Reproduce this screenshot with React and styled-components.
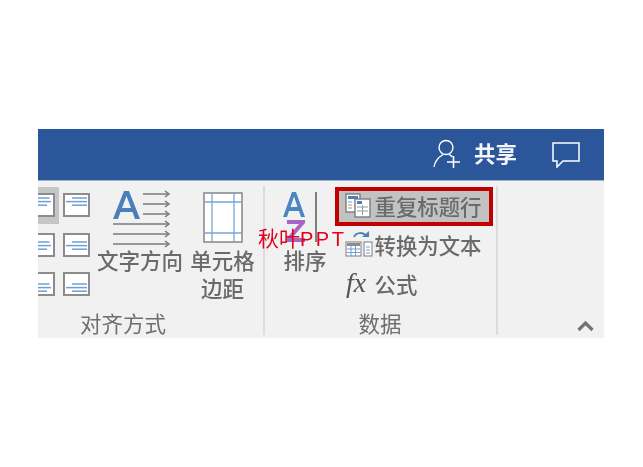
import React from 'react';
import styled, { createGlobalStyle } from 'styled-components';

const GlobalStyle = createGlobalStyle`
  html, body { margin: 0; padding: 0; background: #fff; }
  body { font-family: "Noto Sans CJK SC", "Liberation Sans", sans-serif; }
`;

const Page = styled.div`
  width: 643px;
  height: 467px;
  padding: 129px 39px 0 38px;
  box-sizing: border-box;
  overflow: hidden;
`;

const Window = styled.div`
  position: relative;
  width: 566px;
  height: 209px;
  display: flex;
  flex-direction: column;
  filter: blur(0.35px);
`;

const TitleBar = styled.div`
  height: 51px;
  flex: none;
  background: #2b579a;
  border-bottom: 1px solid #9fb2d0;
  display: flex;
  align-items: center;
  justify-content: flex-end;
  padding-right: 24px;
`;

const ShareLabel = styled.span`
  font-size: 21.5px;
  font-weight: 700;
  color: #f4f6fa;
  line-height: 28px;
  margin: 0 35px 4px 13px;
`;

const Ribbon = styled.div`
  flex: 1;
  background: #f1f1f1;
  display: flex;
  position: relative;
`;

const Group = styled.section`
  width: ${p => p.$width}px;
  flex: none;
  position: relative;
  display: flex;
  flex-direction: column;
  overflow: hidden;
  &::after {
    content: '';
    position: absolute;
    right: 0;
    top: 5px;
    bottom: 3px;
    width: 2px;
    background: #dcdcdc;
  }
`;

const GroupBody = styled.div`
  flex: 1;
  display: flex;
  padding-top: 6px;
`;

const GroupLabel = styled.div`
  height: 29px;
  font-size: 21.5px;
  line-height: 28px;
  color: #6f6f6f;
  text-align: center;
  padding-right: ${p => p.$shift || 0}px;
`;

const AlignGrid = styled.div`
  margin-left: -15px;
  width: 71px;
  flex: none;
  display: grid;
  grid-template-columns: 36px 35px;
  grid-auto-rows: 39.5px;
`;

const AlignCell = styled.div`
  display: flex;
  align-items: flex-start;
  justify-content: center;
  padding-top: 6px;
  box-sizing: border-box;
  height: ${p => (p.$active ? '37px' : 'auto')};
  background: ${p => (p.$active ? '#c6c6c6' : 'transparent')};
`;

const BigButton = styled.div`
  display: flex;
  flex-direction: column;
  align-items: center;
  flex: none;
  width: ${p => p.$width}px;
  margin-left: ${p => p.$left || 0}px;
`;

const IconSlot = styled.div`
  height: 59px;
  display: flex;
  align-items: flex-start;
  justify-content: center;
  padding-top: ${p => p.$top || 0}px;
  box-sizing: border-box;
`;

const BigText = styled.div`
  font-size: 21.5px;
  font-weight: 500;
  line-height: 28px;
  color: #6a6a6a;
  text-align: center;
  white-space: nowrap;
`;

const ToolColumn = styled.div`
  margin-left: 8px;
  width: 158px;
  flex: none;
  display: flex;
  flex-direction: column;
`;

const ToolRow = styled.div`
  height: 39px;
  box-sizing: border-box;
  display: flex;
  align-items: center;
  font-size: 21.4px;
  font-weight: 500;
  color: #6a6a6a;
  white-space: nowrap;
  padding-left: ${p => (p.$marked ? 6 : 10)}px;
  padding-bottom: 3px;
  ${p => p.$marked && `
    border: 4px solid #c00000;
    background: #c2c2c2;
  `}
`;

const ToolIcon = styled.span`
  width: 29.500px;
  flex: none;
  display: flex;
  align-items: center;
`;

const Collapse = styled.div`
  position: absolute;
  right: 10px;
  bottom: 6px;
  display: flex;
`;

const Watermark = styled.div`
  position: absolute;
  left: 220px;
  top: 42px;
  font-size: 21px;
  line-height: 28px;
  color: #e3001b;
  white-space: nowrap;
`;

const WatermarkLatin = styled.span`
  font-size: 20px;
  letter-spacing: 2.5px;
  font-family: "Liberation Sans", sans-serif;
`;

function AlignIcon({ row, side }) {
  const top = { top: 4, mid: 8, bot: 11 }[row];
  const spans = side === 'left'
    ? [[2, 21.5], [2, 23], [2, 19]]
    : [[9, 24], [3, 24], [9, 24]];
  return (
    <svg width="27" height="24" viewBox="0 0 27 24">
      <rect x="1" y="1" width="25" height="22" fill="#fff" stroke="#8c8c8c" strokeWidth="2" />
      <g stroke="#6f9fd4" strokeWidth="1.5">
        {spans.map(([x1, x2], i) => (
          <line key={i} x1={x1} x2={x2} y1={top + 1 + i * 3.6} y2={top + 1 + i * 3.6} />
        ))}
      </g>
    </svg>
  );
}

function TextDirectionIcon() {
  const arrow = (x, y) => (
    <g key={y}>
      <line x1={x} x2="55" y1={y} y2={y} stroke="#7a7a7a" strokeWidth="1.5" />
      <path d={`M52 ${y - 3} L56 ${y} L52 ${y + 3}`} fill="none" stroke="#7a7a7a" strokeWidth="1.5" />
    </g>
  );
  return (
    <svg width="61" height="58" viewBox="-3 0 61 58">
      <path d="M0 29 L11 1 H16 L27 29 H22 L19.500 22 H7.500 L5 29 Z M9 18 H18 L13.500 6 Z" fill="#4a80ba" fillRule="evenodd" />
      {[4, 14, 24].map(y => arrow(30, y))}
      {[34, 44, 54].map(y => arrow(0, y))}
    </svg>
  );
}

function CellMarginIcon() {
  return (
    <svg width="40" height="51" viewBox="0 0 40 51">
      <rect x="1" y="1" width="38" height="49" fill="#fff" stroke="#8c8c8c" strokeWidth="1.6" />
      <g stroke="#79a5d6" strokeWidth="1.3">
        <line x1="9" x2="9" y1="1" y2="50" />
        <line x1="31" x2="31" y1="1" y2="50" />
        <line x1="1" x2="39" y1="10" y2="10" />
        <line x1="1" x2="39" y1="41" y2="41" />
      </g>
    </svg>
  );
}

function SortIcon() {
  return (
    <svg width="44" height="54" viewBox="0 0 44 54">
      <path d="M0 26 L9 1 H13 L22 26 H18 L16 20 H6 L4 26 Z M7.500 16 H14.500 L11 5.500 Z" fill="#4a86c0" fillRule="evenodd" />
      <path d="M4 29 H22 V32 L9 47 H22 V51 H3 V48 L16 33 H4 Z" fill="#a566c8" />
      <rect x="32" y="1" width="2" height="50" fill="#808080" />
    </svg>
  );
}

function RepeatHeaderIcon() {
  return (
    <svg width="26" height="25" viewBox="0 0 26 25">
      <rect x="1" y="1" width="14" height="18" fill="#fff" stroke="#7c7c7c" strokeWidth="1.4" />
      <rect x="3" y="3" width="10" height="3" fill="#4a80ba" />
      <path d="M3 9 H7 M3 12 H7 M3 15 H7" stroke="#9a9a9a" />
      <rect x="10" y="6" width="15" height="18" fill="#fff" stroke="#7c7c7c" strokeWidth="1.4" />
      <rect x="12" y="8" width="5" height="3" fill="#4a80ba" />
      <path d="M12 14 H23 M12 18 H23 M17.500 12 V22" stroke="#9a9a9a" />
    </svg>
  );
}

function ConvertIcon() {
  return (
    <svg width="28" height="28" viewBox="0 0 28 28">
      <path d="M9 7 C11 2 18 2 21 6" fill="none" stroke="#4a80ba" strokeWidth="2" />
      <path d="M17 7 H24 V1 Z" fill="#4a80ba" />
      <rect x="1" y="12" width="15" height="14" fill="#fff" stroke="#7c7c7c" />
      <rect x="2" y="13" width="13" height="3" fill="#8c8c8c" />
      <path d="M2 19 H15 M2 22.500 H15 M6 16 V26 M10.500 16 V26" stroke="#6f9fd4" />
      <rect x="19" y="12" width="8" height="14" fill="#fff" stroke="#7c7c7c" />
      <path d="M21 17 H25 M21 20 H25 M21 23 H25" stroke="#6f9fd4" />
    </svg>
  );
}

function FxIcon() {
  return (
    <svg width="24" height="32" viewBox="0 0 24 32" style={{ overflow: 'visible' }}>
      <text x="1" y="24.500" fontFamily="Liberation Serif, serif" fontStyle="italic" fontSize="28" fill="#555">
        fx
      </text>
    </svg>
  );
}

function ShareIcon() {
  return (
    <svg width="28" height="30" viewBox="0 0 28 30" style={{ marginBottom: 2 }}>
      <circle cx="13" cy="8.500" r="7" fill="none" stroke="#fff" strokeWidth="1.4" />
      <path d="M1 28 C2 21 6 18 10 15.500 M16 15.500 C17.500 16.500 18.500 17 19.500 18" fill="none" stroke="#fff" strokeWidth="1.4" />
      <path d="M20.500 17 V29 M14 23 H27" stroke="#fff" strokeWidth="1.6" />
    </svg>
  );
}

function CommentIcon() {
  return (
    <svg width="28" height="26" viewBox="0 0 28 26">
      <path d="M1 1 H27 V19 H11 L5 25 V19 H1 Z" fill="none" stroke="#fff" strokeWidth="1.5" />
    </svg>
  );
}

function ChevronIcon() {
  return (
    <svg width="17" height="12" viewBox="0 0 17 12">
      <path d="M1.500 10 L8.500 3 L15.500 10" fill="none" stroke="#737373" strokeWidth="3.2" />
    </svg>
  );
}

const alignRows = ['top', 'mid', 'bot'];

export default function App() {
  return (
    <Page>
      <GlobalStyle />
      <Window>
        <TitleBar>
          <ShareIcon />
          <ShareLabel>共享</ShareLabel>
          <CommentIcon />
        </TitleBar>
        <Ribbon>
          <Group $width={227}>
            <GroupBody>
              <AlignGrid>
                {alignRows.map((row, i) => (
                  <React.Fragment key={row}>
                    <AlignCell $active={i === 0}><AlignIcon row={row} side="left" /></AlignCell>
                    <AlignCell><AlignIcon row={row} side="center" /></AlignCell>
                  </React.Fragment>
                ))}
              </AlignGrid>
              <BigButton $width={86} $left={3}>
                <IconSlot $top={3}><TextDirectionIcon /></IconSlot>
                <BigText>文字方向</BigText>
              </BigButton>
              <BigButton $width={65} $left={7}>
                <IconSlot $top={5}><CellMarginIcon /></IconSlot>
                <BigText>单元格<br />边距</BigText>
              </BigButton>
            </GroupBody>
            <GroupLabel $shift={57}>对齐方式</GroupLabel>
          </Group>
          <Group $width={233}>
            <GroupBody>
              <BigButton $width={44} $left={18}>
                <IconSlot $top={4}><SortIcon /></IconSlot>
                <BigText>排序</BigText>
              </BigButton>
              <ToolColumn>
                <ToolRow $marked>
                  <ToolIcon><RepeatHeaderIcon /></ToolIcon>
                  重复标题行
                </ToolRow>
                <ToolRow>
                  <ToolIcon><ConvertIcon /></ToolIcon>
                  转换为文本
                </ToolRow>
                <ToolRow>
                  <ToolIcon><FxIcon /></ToolIcon>
                  公式
                </ToolRow>
              </ToolColumn>
            </GroupBody>
            <GroupLabel $shift={3}>数据</GroupLabel>
          </Group>
          <Collapse><ChevronIcon /></Collapse>
          <Watermark>秋叶<WatermarkLatin>PPT</WatermarkLatin></Watermark>
        </Ribbon>
      </Window>
    </Page>
  );
}
